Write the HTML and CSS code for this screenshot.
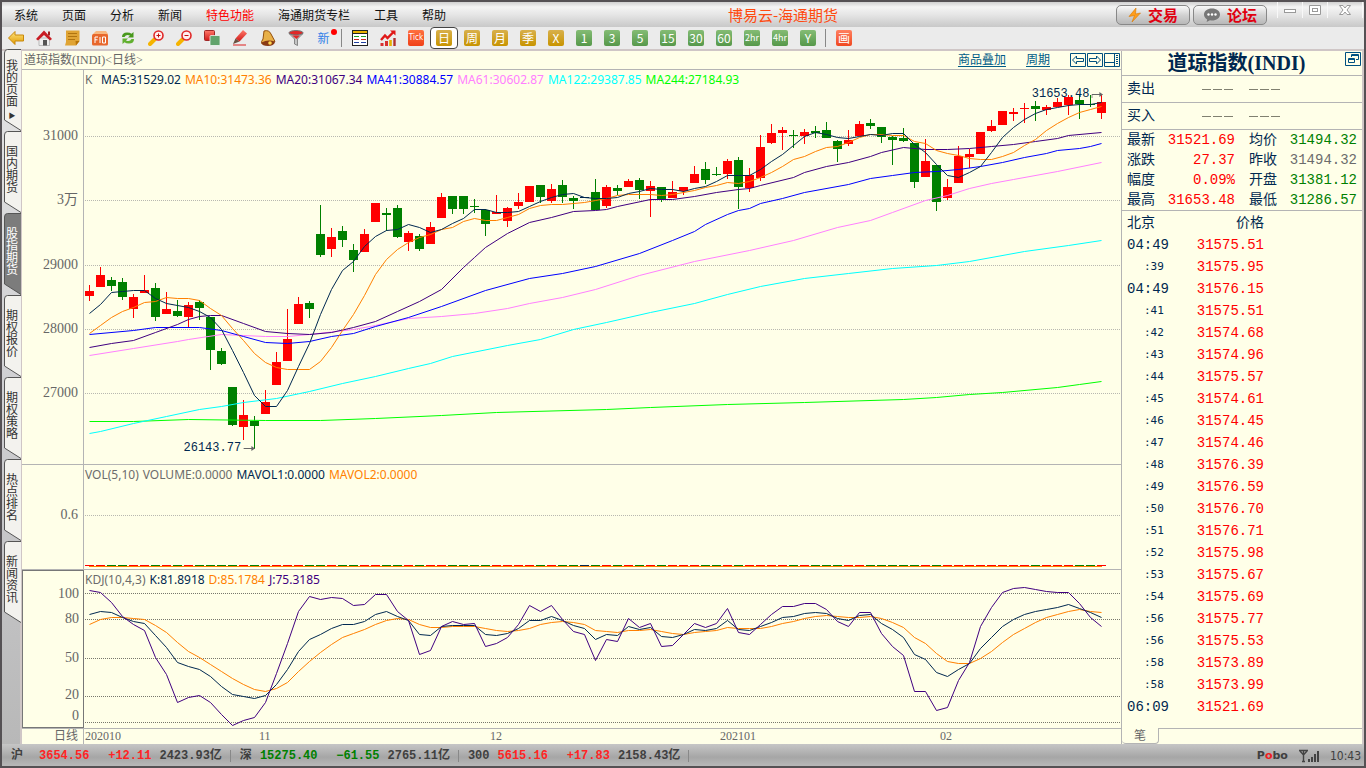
FILE: index.html
```html
<!DOCTYPE html>
<html lang="zh-CN">
<head>
<meta charset="utf-8">
<title>博易云-海通期货</title>
<link rel="stylesheet" href="styles.css">
</head>
<body>
<svg class="defs" aria-hidden="true">
  <defs>
    <linearGradient id="gold" x1="0" y1="0" x2="0" y2="1"><stop offset="0" stop-color="#ffe680"/><stop offset="1" stop-color="#e09a00"/></linearGradient>
    <linearGradient id="red" x1="0" y1="0" x2="0" y2="1"><stop offset="0" stop-color="#ff7a6a"/><stop offset="1" stop-color="#d01818"/></linearGradient>
    <symbol id="tab" viewBox="0 0 17 82"><path d="M17 .5H3.500Q.5 .5 .5 4V71L17 81.500Z" fill="currentColor"/><path d="M17 .5H3.500Q.5 .5 .5 4V71L17 81.500" fill="none" stroke="#555"/></symbol>
  </defs>
</svg>
<div class="window">
  <header class="titlebar">
    <nav class="menu">
      <button>系统</button><button>页面</button><button>分析</button><button>新闻</button><button class="hot">特色功能</button><button>海通期货专栏</button><button>工具</button><button>帮助</button>
    </nav>
    <h1 class="app-title">博易云-海通期货</h1>
    <div class="title-actions">
      <button class="pill"><svg width="14" height="16" viewBox="0 0 14 16"><path d="M8 1 1 9.500 6.500 8.500 4 15 12.500 6 7.500 7Z" fill="#ff9d1c" stroke="#d87800" stroke-width=".6"/></svg>交易</button>
      <button class="pill"><svg width="18" height="16" viewBox="0 0 18 16"><path d="M9 1.500C4.500 1.500 1 4 1 7.500 1 9.600 2.200 11.300 4.200 12.400L3.600 15 7 13.300Q8 13.500 9 13.500C13.500 13.500 17 11 17 7.500S13.500 1.500 9 1.500Z" fill="#777"/><circle cx="5.500" cy="7.500" r="1.200" fill="#fff"/><circle cx="9" cy="7.500" r="1.200" fill="#fff"/><circle cx="12.500" cy="7.500" r="1.200" fill="#fff"/></svg>论坛</button>
    </div>
    <div class="window-buttons">
      <button aria-label="最小化"><svg width="14" height="14" viewBox="0 0 14 14"><rect x="1.500" y="6.500" width="11" height="3" fill="#fff" stroke="#999"/></svg></button>
      <button aria-label="最大化"><svg width="14" height="14" viewBox="0 0 14 14"><path d="M1.500 2.500h11v9h-11Z" fill="#fff" stroke="#999"/><rect x="4.500" y="5.500" width="5" height="3" fill="none" stroke="#999"/></svg></button>
      <button aria-label="关闭"><svg width="14" height="14" viewBox="0 0 14 14"><path d="M1.500 2.500h3.500L7 5l2-2.500h3.500L9 7l3.500 4.500H9L7 9 5 11.500H1.500L5 7Z" fill="#fff" stroke="#999"/></svg></button>
    </div>
  </header>

  <div class="toolbar">
    <button aria-label="后退"><svg viewBox="0 0 16 16"><path d="M.5 8 7 1.500v3.500h8.500v6H7V14.500Z" fill="url(#gold)" stroke="#c8880a"/></svg></button>
    <button aria-label="首页"><svg viewBox="0 0 16 16"><rect x="12" y="1.500" width="2" height="4" fill="#a02020"/><path d="M3 8h10.500v7.500H3Z" fill="#eee" stroke="#999" stroke-width=".6"/><path d="M0 9 8 .5 16 9l-2 1.500L8 5 2 10.500Z" fill="#c81c24"/><rect x="7" y="10" width="4" height="5.500" fill="#555"/></svg></button>
    <button aria-label="便笺"><svg viewBox="0 0 16 16"><path d="M2 .5h13.500v10.500L12 15.500H1L2 12Z" fill="#e0a434"/><path d="M15.500 11 12 15.500l-.5-4.500Z" fill="#b87408"/><path d="M4 3.500h9M4 6.500h9M4 9.500h7" stroke="#b07410"/></svg></button>
    <button aria-label="F10"><svg viewBox="0 0 16 16"><path d="M1 4 4 1h10l2 3V6H1Z" fill="#f8b880"/><rect x="0" y="4" width="16" height="11.500" rx="1.500" fill="#e8682c"/><path d="M3 13V7H6M3 9.800H5.500M8 7V13M10.500 7h3v6h-3Z" stroke="#fff" fill="none"/></svg></button>
    <button aria-label="刷新"><svg viewBox="0 0 16 16"><path d="M2 7Q2 2.500 7 2.500q3 0 4.500 1.200L13.500 2V7.500H8L10 5.500Q6 4 4.500 7Z" fill="#48981c"/><path d="M14 9Q14 13.500 9 13.500q-3 0-4.500-1.200L2.500 14V8.500H8L6 10.500Q10 12 11.500 9Z" fill="#62b030"/></svg></button>
    <button aria-label="放大"><svg viewBox="0 0 16 16"><path d="M6.500 9.500 2 14" stroke="#f5b400" stroke-width="4" stroke-linecap="round"/><circle cx="10.500" cy="5.500" r="4.500" fill="#fff0f0" stroke="#e02828" stroke-width="1.600"/><path d="M8.500 5.500h4M10.500 3.500v4" stroke="#c01010"/></svg></button>
    <button aria-label="缩小"><svg viewBox="0 0 16 16"><path d="M6.500 9.500 2 14" stroke="#f5b400" stroke-width="4" stroke-linecap="round"/><circle cx="10.500" cy="5.500" r="4.500" fill="#fff0f0" stroke="#e02828" stroke-width="1.600"/><path d="M8.500 5.500h4" stroke="#c01010"/></svg></button>
    <button aria-label="叠加"><svg viewBox="0 0 16 16"><rect x=".5" y=".5" width="10" height="10" rx="1" fill="url(#red)" stroke="#a02828"/><rect x="6" y="5.500" width="10" height="10" rx="1" fill="#62a46c" stroke="#fff" stroke-width=".7"/></svg></button>
    <button aria-label="画笔"><svg viewBox="0 0 16 16"><path d="m11 0 4 3.500L7.500 11.500 3.500 8.500Z" fill="url(#red)"/><path d="M3.500 8.500 7.500 11.500 1 14Z" fill="#6a5040"/><path d="M1 15h13" stroke="#e04040" stroke-width="1.200"/></svg></button>
    <button aria-label="预警"><svg viewBox="0 0 16 16"><path d="M4 1Q9-.5 11 4l4 7.500L2 14Q.5 12 3 9Z" fill="#e8b048" stroke="#94500c"/><path d="M1.500 12.500q7-3.500 13.500-.5-1 4-7 4t-6.500-3.500Z" fill="#8a3a14"/><circle cx="10" cy="13" r="1.800" fill="#ffd850"/></svg></button>
    <button aria-label="筛选"><svg viewBox="0 0 16 16"><ellipse cx="8" cy="2.800" rx="7" ry="2.300" fill="#e02828" stroke="#777"/><path d="M1 3.500Q8 7 15 3.500L9.500 9v6.500L6.500 14V9Z" fill="#c4c4c4" stroke="#666" stroke-width=".7"/><path d="M4 5.500h8L8.500 9Z" fill="#e02828"/></svg></button>
    <button class="new" aria-label="新功能">新<i></i></button>
    <span class="sep"></span>
    <button aria-label="列表"><svg viewBox="0 0 16 16"><rect x=".5" y=".5" width="15" height="15" fill="#fff" stroke="#222"/><path d="M1 2h14" stroke="#e8b000" stroke-width="2"/><path d="M1 3.500h14" stroke="#222"/><path d="M2 6.500h5M9 6.500h5" stroke="#20a020"/><path d="M2 9.500h5M9 9.500h5" stroke="#d02020"/><path d="M2 12.500h5M9 12.500h5" stroke="#2040a0"/></svg></button>
    <button aria-label="走势"><svg viewBox="0 0 16 16"><path d="M1 10 5 5.500 7.500 8 14 1.500" fill="none" stroke="#e01818" stroke-width="2.400"/><path d="M10 .5H15.500v5Z" fill="#e01818"/><path d="M2 13v3M6.500 11v5" stroke="#d83030" stroke-width="3"/><path d="M10.500 10v6" stroke="#e8b000" stroke-width="2.600"/><path d="M14.500 8v8" stroke="#b03030" stroke-width="2.400"/></svg></button>
    <button><b class="key tick">Tick</b></button>
    <button class="selected"><b class="key gold">日</b></button>
    <button><b class="key gold">周</b></button>
    <button><b class="key gold">月</b></button>
    <button><b class="key gold">季</b></button>
    <button><b class="key gold">X</b></button>
    <button><b class="key green">1</b></button>
    <button><b class="key green">3</b></button>
    <button><b class="key green">5</b></button>
    <button><b class="key green">15</b></button>
    <button><b class="key green">30</b></button>
    <button><b class="key green">60</b></button>
    <button><b class="key green narrow">2hr</b></button>
    <button><b class="key green narrow">4hr</b></button>
    <button><b class="key green">Y</b></button>
    <span class="sep"></span>
    <button><b class="key draw">画</b></button>
  </div>

  <div class="content">
    <nav class="side-tabs">
      <button><svg><use href="#tab"/></svg><span>我的页面</span><i>▶</i></button>
      <button><svg><use href="#tab"/></svg><span>国内期货</span></button>
      <button class="active"><svg><use href="#tab"/></svg><span>股指期货</span></button>
      <button><svg><use href="#tab"/></svg><span>期权报价</span></button>
      <button><svg><use href="#tab"/></svg><span>期权策略</span></button>
      <button><svg><use href="#tab"/></svg><span>热点排名</span></button>
      <button><svg><use href="#tab"/></svg><span>新闻资讯</span></button>
    </nav>

    <main class="chart">
      <div class="chart-head">
        <span>道琼指数(INDI)&lt;日线&gt;</span>
        <div class="chart-links">
          <a href="#">商品叠加</a><a href="#">周期</a>
          <div class="nav-icons">
            <button aria-label="左移"><svg width="16" height="14" viewBox="0 0 16 14"><path d="M.5.5h15v13H.5ZM2.500 7l4-4v2.500h7v3h-7V11Z" fill="none" stroke="#005080"/></svg></button>
            <button aria-label="右移"><svg width="16" height="14" viewBox="0 0 16 14"><path d="M.5.5h15v13H.5ZM13.500 7l-4-4v2.500h-7v3h7V11Z" fill="none" stroke="#005080"/></svg></button>
            <button aria-label="布局"><svg width="16" height="14" viewBox="0 0 16 14"><path d="M.5.5h15v13H.5ZM.5 9.500H10M10.500.5v13" fill="none" stroke="#005080"/><path d="M13 2v10" stroke="#005080" stroke-width="2" stroke-dasharray="1 1"/></svg></button>
          </div>
        </div>
      </div>
      <section class="pane">
        <div class="axis" id="price-axis"></div>
        <div class="plot">
          <svg class="canvas" id="price" viewBox="84 70 1037 394" preserveAspectRatio="none"></svg>
          <div class="legend"><span class="grey name">K</span><span class="navy">MA5:31529.02</span><span class="orange">MA10:31473.36</span><span class="purple">MA20:31067.34</span><span class="blue">MA41:30884.57</span><span class="pink">MA61:30602.87</span><span class="cyan">MA122:29387.85</span><span class="lime">MA244:27184.93</span></div>
          <div class="mark low">26143.77<svg width="12" height="7" viewBox="0 0 12 7"><path d="M0 3.500h11" stroke="#666"/><path d="M8 1l3.500 2.500L8 6Z" fill="#666"/></svg></div>
          <div class="mark high">31653.48<svg width="12" height="7" viewBox="0 0 12 7"><path d="M.5 7V3.500H11" fill="none" stroke="#666"/><path d="M8 1l3.500 2.500L8 6Z" fill="#666"/></svg></div>
        </div>
      </section>
      <section class="pane">
        <div class="axis" id="volume-axis"></div>
        <div class="plot">
          <svg class="canvas" id="volume" viewBox="84 465 1037 104" preserveAspectRatio="none"></svg>
          <div class="legend"><span class="grey">VOL(5,10)</span><span class="grey">VOLUME:0.0000</span><span class="navy">MAVOL1:0.0000</span><span class="orange">MAVOL2:0.0000</span></div>
        </div>
      </section>
      <section class="pane">
        <div class="axis focused" id="kdj-axis"></div>
        <div class="plot">
          <svg class="canvas" id="kdj" viewBox="84 570 1037 158" preserveAspectRatio="none"></svg>
          <div class="legend"><span class="grey">KDJ(10,4,3)</span><span class="navy">K:81.8918</span><span class="orange">D:85.1784</span><span class="purple">J:75.3185</span></div>
        </div>
      </section>
      <div class="time-row">
        <div class="period">日线</div>
        <div class="times" id="times"></div>
      </div>
    </main>

    <aside class="quote">
      <div class="quote-title"><h2>道琼指数(INDI)</h2><button aria-label="还原窗口"><svg width="16" height="14" viewBox="0 0 16 14"><path d="M.5.5h15v13H.5ZM6.500 5V2.500h7v5H11M3.500 6.500h6v4h-6ZM6.500 3.500h7M3.500 7.500h6" fill="none" stroke="#005080"/></svg></button></div>
      <div class="side-row"><span>卖出</span><i></i><i></i></div>
      <div class="side-row"><span>买入</span><i></i><i></i></div>
      <dl class="facts">
        <dt>最新</dt><dd class="up">31521.69</dd><dt>均价</dt><dd class="down">31494.32</dd>
        <dt>涨跌</dt><dd class="up">27.37</dd><dt>昨收</dt><dd class="grey">31494.32</dd>
        <dt>幅度</dt><dd class="up">0.09%</dd><dt>开盘</dt><dd class="down">31381.12</dd>
        <dt>最高</dt><dd class="up">31653.48</dd><dt>最低</dt><dd class="down">31286.57</dd>
      </dl>
      <table class="ticks">
        <thead><tr><th>北京</th><th>价格</th></tr></thead>
        <tbody id="ticks"></tbody>
      </table>
      <div class="quote-foot"><button>笔</button><span></span></div>
    </aside>
  </div>

  <footer class="status">
    <div class="index first"><span>沪</span><b class="up">3654.56</b><b class="chg up">+12.11</b><b class="amt">2423.93亿</b></div>
    <div class="index"><span>深</span><b class="down">15275.40</b><b class="chg down">−61.55</b><b class="amt">2765.11亿</b></div>
    <div class="index"><span>300</span><b class="up">5615.16</b><b class="chg up">+17.83</b><b class="amt">2158.43亿</b></div>
    <div class="status-end">
      <b class="brand">P<em>o</em>bo</b>
      <svg width="22" height="14" viewBox="0 0 22 14"><path d="M1 1.500h9M2 2l3.500 4L9 2M5.500 2v10M4 12.500h3" fill="none" stroke="#444" stroke-width="1.400"/><path d="M11 13v-3M14 13V8M17 13V5M20 13V2" stroke="#444" stroke-width="2"/></svg>
      <time>10:43</time>
    </div>
  </footer>
</div>
<script src="chart.js"></script>
</body>
</html>
```
FILE: styles.css
```css
* { box-sizing: border-box; }
body { margin: 0; background: #505050; font: 12px/14px "Liberation Serif", "Noto Sans CJK SC", serif; color: #002850; }
button { margin: 0; padding: 0; border: 0; background: none; font: inherit; color: inherit; cursor: pointer; }
h1, h2, dl, dd { margin: 0; }
i, em { font-style: normal; }
svg { display: block; }
.defs { position: absolute; width: 0; height: 0; }

.window { display: flex; flex-direction: column; height: 100vh; min-height: 640px; border: 2px solid #555154; background: #ececec; }

.titlebar { position: relative; display: flex; align-items: center; height: 25px; padding-left: 12px; background: linear-gradient(#d0d0d0, #f4f4f4 20%, #e6e6e6 50%, #c8c8c8); font-family: "Noto Sans CJK SC", sans-serif; }
.menu { display: flex; gap: 24px; color: #111; white-space: nowrap; }
.menu .hot { color: #f00; }
.app-title { position: absolute; left: 0; right: 0; margin: 0 auto; padding-left: 200px; text-align: center; font-size: 15px; line-height: 20px; font-weight: 400; color: #ff4a10; pointer-events: none; }
.title-actions { display: flex; gap: 3px; margin-left: auto; margin-right: 10px; }
.pill { display: flex; align-items: center; justify-content: center; gap: 6px; width: 74px; height: 20px; border: 1px solid #888; border-radius: 5px; background: linear-gradient(#fafafa, #d2d2d2 50%, #b8b8b8); color: #e00010; font-size: 15px; line-height: 18px; font-weight: 700; }
.window-buttons { display: flex; align-self: flex-start; height: 16px; margin-right: 1px; }
.window-buttons button { display: flex; align-items: center; justify-content: center; width: 25px; border-left: 1px solid #f8f8f8; }
.window-buttons button:last-child { width: 36px; border-right: 1px solid #f8f8f8; }

.toolbar { display: flex; align-items: center; height: 22px; background: #ebebeb; }
.toolbar button { display: flex; align-items: center; justify-content: center; width: 28px; height: 22px; flex: none; }
.toolbar svg { width: 16px; height: 16px; }
.toolbar .new { position: relative; width: 27px; color: #3080e8; font-family: "Noto Sans CJK SC", sans-serif; }
.new i { position: absolute; right: 0; top: 2px; width: 6px; height: 6px; border-radius: 50%; background: #f00; }
.sep { width: 1px; height: 18px; margin: 0 4px; background: #888; flex: none; }
.toolbar .sep:last-of-type { margin: 0 4px 0 3px; }
.toolbar .selected { border: 1px solid #444; border-radius: 4px; background: #fff; }
.key { display: block; width: 16px; height: 16px; border-radius: 2px; color: #fff; font: 12px/16px "Noto Sans CJK SC", sans-serif; text-align: center; }
.key.gold { background: linear-gradient(#d8b04c, #c89400); }
.key.green { background: linear-gradient(#84bc74, #56984a); }
.key.draw { background: linear-gradient(#ff8060, #f04820); }
.key.tick { background: linear-gradient(#ff7040, #f04018); font-family: "DejaVu Sans Condensed", sans-serif; font-size: 8px; }
.key.narrow { font-size: 9px; }

.content { display: flex; flex: 1; min-height: 0; border-top: 2px solid #cfc6c6; border-right: 2px solid #cfc6c6; background: #ffffe8; }

.side-tabs { width: 20px; flex: none; padding-left: 2px; border-right: 2px solid #cfc6c6; background: linear-gradient(#e4e4e4, #cfcfd2 50%, #b8b8b8); color: #333; font-family: "Noto Sans CJK SC", sans-serif; }
.side-tabs button { position: relative; display: flex; flex-direction: column; align-items: center; width: 16px; height: 82px; padding-top: 14px; line-height: 12px; }
.side-tabs button:first-child { height: 80px; padding-top: 8px; }
.side-tabs svg { position: absolute; left: 0; bottom: 0; width: 17px; height: 82px; color: #f3f2ee; }
.side-tabs span { position: relative; width: 12px; overflow-wrap: anywhere; }
.side-tabs i { position: relative; font-size: 7px; margin-top: 2px; }
.side-tabs .active { color: #fff; }
.side-tabs .active svg { color: #7c7c7c; }

.chart { display: grid; flex: 1; min-width: 0; grid-template-rows: 19px 395fr 105fr 159fr 15px; border-right: 1px solid #b4b4b4; }
.chart-head { display: flex; justify-content: space-between; align-items: center; padding: 0 1px 0 2px; border-bottom: 1px solid #b4b4b4; color: #666; }
.chart-links { display: flex; align-items: center; gap: 20px; }
.chart-links a { color: #005c87; text-underline-offset: 2px; }
.nav-icons { display: flex; gap: 1px; }
.pane { display: flex; min-height: 0; border-bottom: 1px solid #b4b4b4; }
.axis { position: relative; width: 62px; flex: none; border-right: 1px solid #b4b4b4; color: #666; font-size: 14px; line-height: 16px; }
.axis.focused { border: 1px solid #777; }
.axis span { position: absolute; right: 5px; transform: translateY(-50%); }
.focused span { right: 4px; }
.plot { position: relative; flex: 1; min-width: 0; }
.canvas { position: absolute; inset: 0; width: 100%; height: 100%; overflow: visible; }
.canvas * { vector-effect: non-scaling-stroke; }
.canvas .crisp { shape-rendering: crispEdges; }
.legend { position: relative; display: flex; gap: 4px; padding: 3px 1px; font: 12px/14px "Noto Sans", "DejaVu Sans", sans-serif; white-space: nowrap; }
.legend .name { width: 12px; }
.mark { position: absolute; display: flex; align-items: center; gap: 2px; font: 12px/14px "Liberation Mono", monospace; transform: translate(-100%, -50%); }
.mark.low { left: 16.5%; top: 96%; }
.mark.high { left: 98.3%; top: 6.2%; }

.grey { color: #6c6c6c; }
.navy { color: #002850; }
.orange { color: #ff8000; }
.purple { color: #400080; }
.blue { color: #0000ff; }
.pink { color: #ff80ff; }
.cyan { color: #00ffff; }
.lime { color: #00ff00; }
.up { color: #f00; }
.down { color: #008000; }

.time-row { display: flex; color: #666; line-height: 14px; }
.period { width: 62px; padding-right: 5px; border-right: 1px solid #b4b4b4; text-align: right; }
.times { position: relative; flex: 1; }
.times span { position: absolute; }

.quote { display: flex; flex-direction: column; width: 240px; flex: none; min-height: 0; font-size: 14px; line-height: 20px; }
.quote-title { display: flex; align-items: center; height: 25px; border-bottom: 1px solid #b4b4b4; }
.quote-title h2 { flex: 1; padding-left: 6px; text-align: center; font-size: 20px; line-height: 22px; }
.quote-title button { align-self: flex-start; margin: 1px 1px 0 0; }
.side-row { display: flex; align-items: center; height: 27px; padding-left: 5px; border-bottom: 1px solid #b4b4b4; }
.side-row i { width: 32px; height: 1px; margin-left: 15px; background: repeating-linear-gradient(90deg, #808070 0 9px, transparent 9px 11px); }
.side-row span + i { margin-left: 47px; }
.facts { display: grid; grid-template-columns: 28px 80px 42px 1fr; padding: 0 5px 0 5px; border-bottom: 1px solid #b4b4b4; }
.facts dt:nth-of-type(even) { padding-left: 14px; }
.facts dd { font-family: "Liberation Mono", monospace; text-align: right; }
.ticks { width: 142px; border-collapse: collapse; }
.ticks th { padding: 0; height: 23px; font-weight: 400; text-align: right; }
.ticks th:first-child, .ticks td:first-child { padding-left: 5px; width: 60px; text-align: left; }
.ticks td { padding: 0; height: 22px; font-family: "Liberation Mono", monospace; text-align: right; }
.ticks .sec { padding-left: 17px; font: 11px/14px "DejaVu Sans Mono", monospace; }
.quote-foot { display: flex; height: 16px; margin-top: auto; color: #666; font-size: 12px; line-height: 14px; }
.quote-foot button { width: 37px; border: 1px solid #b4b4b4; border-width: 0 1px 1px 0; border-radius: 0 0 4px 4px; }
.quote-foot span { flex: 1; border-top: 1px solid #b4b4b4; }

.status { display: flex; align-items: center; height: 22px; padding: 2px 3px 0 9px; background: linear-gradient(#c6c6c6, #a6a6a6 60%, #b8b8b8); color: #404040; font: 12px/16px "Noto Sans CJK SC", sans-serif; white-space: nowrap; }
.index { display: flex; align-items: center; padding-right: 8px; margin-right: 9px; border-right: 1px solid #888; line-height: 12px; }
.index span { font: 700 12px/12px "Liberation Mono", "Noto Sans CJK SC", monospace; padding-right: 8px; }
.index.first span { padding-right: 16px; }
.index b { font-family: "Liberation Mono", "Noto Sans CJK SC", monospace; }
.index .chg { width: 62px; text-align: right; }
.index .amt { padding-left: 8px; }
.status .up { color: #ff2424; }
.status-end { display: flex; align-items: center; gap: 10px; margin-left: auto; }
.brand { font-family: "DejaVu Sans", sans-serif; font-size: 11px; }
.brand em { color: #f02020; }
.status time { font-family: "DejaVu Sans Condensed", sans-serif; }
```
FILE: chart.js
```javascript
const NS = "http://www.w3.org/2000/svg";
const STEP = 11, FIRST = 89;
const xAt = i => FIRST + STEP * i;

function add(parent, name, attrs) {
  const el = document.createElementNS(NS, name);
  for (const k in attrs) el.setAttribute(k, attrs[k]);
  parent.appendChild(el);
}
function grid(svg, ys, color) {
  ys.forEach(y => add(svg, "path", { class: "crisp", d: `M85 ${y}.5H1121`, stroke: color, "stroke-dasharray": "1 1", fill: "none" }));
}
function line(svg, points, color) {
  add(svg, "polyline", { points: points.map(p => `${p[0] + 0.5},${p[1] + 0.5}`).join(" "), fill: "none", stroke: color });
}
const daily = ys => ys.map((y, i) => [xAt(i), y]);
const sparse = s => s.split(" ").map(p => { const [i, y] = p.split(":"); return [xAt(+i), +y]; });
const nums = s => s.split(" ").map(Number);

/* colour, wick top, body top, body bottom, wick bottom */
const candles = `r 285 291 296 301;r 267 275 287 287;g 277 280 286 291;g 278 282 297 300;r 294 297 309 318;r 275 290 293 293;g 283 288 317 321;r 292 309 314 314;g 300 311 316 317;r 302 305 317 327;g 300 302 308 320;g 317 317 350 370;g 348 351 364 365;g 387 387 425 426;r 400 415 427 440;g 416 421 426 449;r 390 402 414 414;r 352 362 385 385;r 309 339 361 361;r 297 304 324 324;g 301 303 309 318;g 205 234 255 257;r 228 237 249 257;g 226 231 240 247;g 244 250 260 272;r 229 234 252 252;r 203 203 222 222;g 208 213 215 231;g 205 208 237 238;r 231 233 242 251;g 234 236 249 251;r 222 227 244 244;r 193 197 218 218;g 196 196 209 214;g 196 196 209 214;g 199 206 207 213;g 209 210 224 236;r 195 212 214 214;r 207 208 221 227;r 193 202 206 209;r 186 186 202 202;g 185 185 197 203;r 184 189 201 203;g 180 185 197 203;g 196 198 201 209;k 197 197 198 198;g 179 192 210 210;r 185 187 206 208;g 185 188 191 195;r 179 181 187 187;g 178 180 190 199;r 181 186 191 217;g 187 187 200 202;r 181 192 198 198;r 187 187 191 195;r 166 174 183 183;g 162 169 180 184;g 167 174 175 176;r 159 161 174 179;g 157 160 187 209;r 168 175 188 192;r 135 147 178 181;r 124 133 143 144;r 127 130 133 150;g 130 135 136 148;r 129 132 136 144;g 126 131 133 138;g 122 130 138 138;g 140 141 149 162;r 130 140 144 146;r 121 124 136 136;g 119 123 126 129;g 127 127 137 143;g 136 137 140 165;g 128 138 141 142;g 143 143 182 188;r 139 161 177 177;g 165 165 202 211;r 179 187 198 200;r 146 156 183 183;r 149 154 157 168;r 132 132 154 154;r 120 126 131 132;r 111 111 125 125;r 108 112 114 121;r 103 108 109 123;g 101 106 109 121;r 105 107 110 115;r 98 102 107 107;r 95 97 105 115;g 95 100 104 119;g 95 104 105 107;r 94 102 113 119`
  .split(";").map(s => s.split(" "));
const fills = { r: "#ff0000", g: "#008000", k: "#002850" };

const price = document.getElementById("price");
grid(price, [136, 200, 265, 329, 393], "#b8b8b0");
candles.forEach(([c, hi, top, bottom, lo], i) => {
  const x = xAt(i), fill = fills[c];
  add(price, "rect", { class: "crisp", x, y: hi, width: 1, height: lo - hi, fill });
  add(price, "rect", { class: "crisp", x: x - 4, y: top, width: 9, height: bottom - top, fill });
});
line(price, sparse("0:421 4:421 9:419 16:420 21:420 26:418 32:415 37:412 47:409 51:407 58:404 65:402 74:399 77:397 80:394 83:392 88:387 90:384 92:381"), "#00ff00");
line(price, sparse("0:433 1:431 4:423 7:416 10:409 12:406 14:402 17:398 20:391 23:383 26:376 29:368 31:363 33:356 38:345 41:339 44:329 47:322 51:312 55:303 58:294 61:286 65:278 69:273 73:268 77:265 80:261 85:251 89:245 92:240"), "#00ffff");
line(price, sparse("0:355 4:348 8:341 9:339 12:334 16:336 18:336 20:334 24:329 26:325 29:318 32:316 35:313 38:308 40:303 43:297 46:289 50:275 55:261 60:250 64:240 68:227 71:220 73:212 76:200 78:195 80:188 82:183 84:179 88:171 92:162"), "#ff80ff");
line(price, sparse("0:334 4:330 6:327 10:327 12:330 14:336 16:342 18:343 20:341 22:336 24:333 26:326 29:317 32:306 36:290 40:278 43:273 46:266 50:253 53:240 55:231 56:224 58:214 59:210 60:208 61:203 63:198 65:192 69:184 71:178 73:175 75:172 77:171 79:169 81:166 83:162 85:157 87:153 88:150 90:148 91:146 92:143"), "#0000ff");
line(price, sparse("0:347 2:343 4:340 6:332 8:324 9:319 10:316 11:315 12:315 14:323 16:331 18:333 20:334 22:332 24:327 26:321 28:311 30:301 32:289 34:267 35:257 36:247 38:233 40:222 42:217 44:211 46:210 47:209 48:206 51:199 53:199 55:196 57:192 59:189 60:188 61:185 64:177 65:172 67:166 69:162 71:156 72:152 74:147 76:149 78:149 80:148 82:146 84:144 86:141 88:138 89:135 92:132"), "#400080");
line(price, daily(nums("333 325 317 311 307 302 301 297 298 298 300 308 315 328 340 353 362 367 369 369 369 361 347 330 314 295 274 259 249 242 237 234 229 227 221 218 220 220 217 214 208 205 204 204 203 202 200 198 195 194 194 194 195 194 192 190 187 185 182 183 181 177 172 166 159 156 151 147 146 142 137 134 134 135 135 141 143 150 153 155 158 159 159 156 152 145 139 130 123 117 112 109 106")), "#ff8000");
line(price, daily(nums("313 304 292 291 290 290 298 303 305 307 311 317 329 350 372 395 406 406 390 366 343 314 289 270 261 246 236 230 229 224 227 232 229 223 218 209 209 212 212 211 206 201 197 194 193 197 198 198 197 193 191 188 189 189 191 188 186 181 175 175 175 169 161 154 145 136 132 134 137 138 136 134 135 133 133 144 152 164 175 177 172 166 152 137 127 119 113 109 107 105 104 104 102")), "#002850");

const volume = document.getElementById("volume");
grid(volume, [515], "#b8b8b0");
candles.forEach(([c], i) => add(volume, "rect", { class: "crisp", x: xAt(i) - 4, y: 565, width: 9, height: 1, fill: fills[c] }));
add(volume, "rect", { class: "crisp", x: 89, y: 566, width: 1013, height: 1, fill: "#ff8000" });

const kdj = document.getElementById("kdj");
grid(kdj, [593, 619, 658, 696, 722], "#77776c");
line(kdj, daily(nums("624 619 617 617 618 619 625 632 642 651 657 664 671 678 684 689 691 688 682 671 661 652 644 637 633 629 624 620 618 619 624 627 627 626 626 626 628 630 631 630 628 624 622 621 622 624 630 631 632 630 630 629 631 633 634 632 631 630 627 628 628 628 626 623 621 618 616 615 616 617 617 616 618 622 627 637 643 653 661 663 663 658 651 642 634 628 622 617 614 611 609 611 612")), "#ff8000");
line(kdj, daily(nums("614 611 612 617 621 623 635 647 662 666 669 676 686 694 696 698 695 684 669 651 639 634 628 624 624 621 614 611 616 620 634 635 626 625 625 625 634 635 633 628 620 620 616 620 625 628 639 634 635 626 629 627 636 637 634 629 630 628 620 629 630 626 622 617 616 613 612 613 618 620 615 614 623 629 637 654 659 672 676 669 663 648 637 626 619 614 611 609 607 604 608 612 617")), "#002850");
line(kdj, daily(nums("590 592 602 616 624 630 657 674 702 697 695 702 714 725 720 717 702 673 643 611 596 599 597 598 605 604 594 594 611 620 654 650 626 621 624 623 646 643 637 624 605 611 605 619 631 634 660 639 641 618 627 623 646 645 634 623 627 623 608 632 634 624 614 606 606 603 603 609 621 626 612 612 633 646 655 691 691 710 707 680 662 626 607 592 588 587 589 591 592 592 603 617 626")), "#400080");

function axis(id, top, height, labels) {
  document.getElementById(id).innerHTML = labels.map(([text, y]) => `<span style="top:${(y - top) / height * 100}%">${text}</span>`).join("");
}
axis("price-axis", 70, 394, [["31000", 136], ["3万", 200], ["29000", 265], ["28000", 329], ["27000", 393]]);
axis("volume-axis", 465, 104, [["0.6", 515]]);
axis("kdj-axis", 570, 158, [["100", 593], ["80", 619], ["50", 658], ["20", 696], ["0", 717]]);
document.getElementById("times").innerHTML = [["202010", 85], ["11", 259], ["12", 490], ["202101", 720], ["02", 940]]
  .map(([text, x]) => `<span style="left:${(x - 84) / 1037 * 100}%">${text}</span>`).join("");

const ticks = `04:49 31575.51,:39 31575.95,04:49 31576.15,:41 31575.51,:42 31574.68,:43 31574.96,:44 31575.57,:45 31574.61,:46 31574.45,:47 31574.46,:48 31576.39,:49 31576.59,:50 31576.70,:51 31576.71,:52 31575.98,:53 31575.67,:54 31575.69,:56 31575.77,:56 31575.53,:58 31573.89,:58 31573.99,06:09 31521.69`;
document.getElementById("ticks").innerHTML = ticks.split(",").map(row => {
  const [time, value] = row.split(" ");
  return `<tr><td><div class="${time[0] === ":" ? "sec" : "min"}">${time}</div></td><td class="up">${value}</td></tr>`;
}).join("");
```
